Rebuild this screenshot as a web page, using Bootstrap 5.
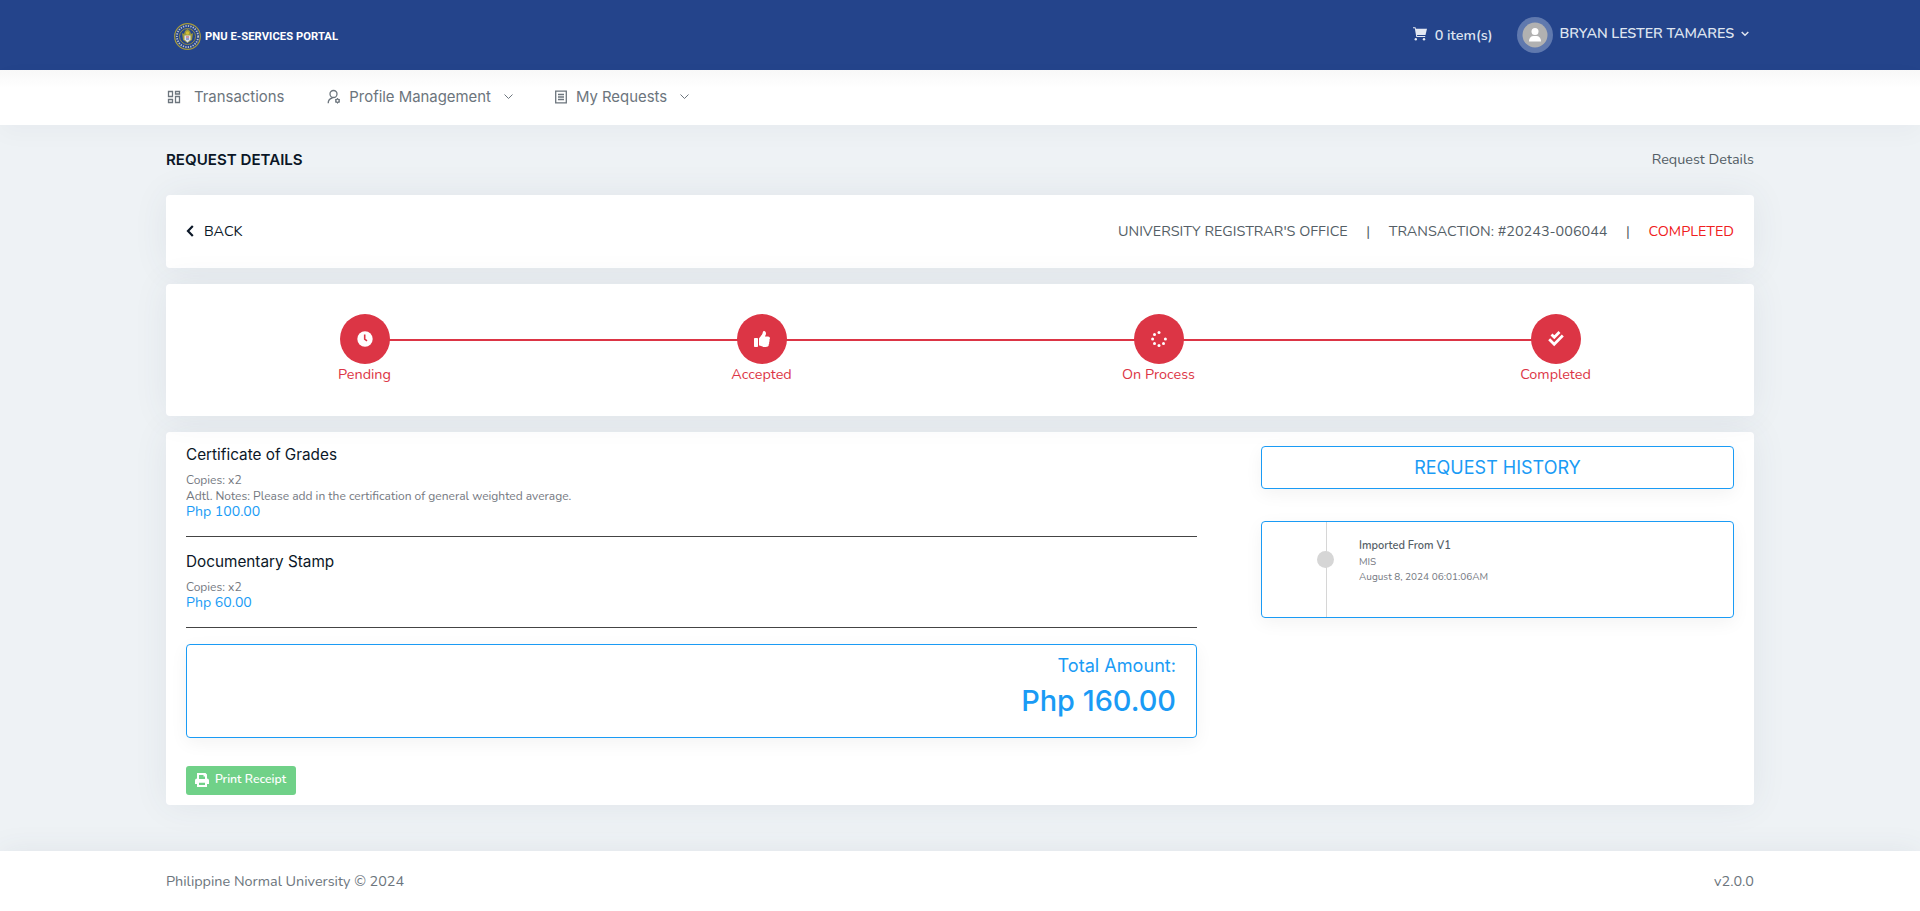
<!DOCTYPE html>
<html lang="en">
<head>
<meta charset="utf-8">
<meta name="viewport" content="width=device-width, initial-scale=1">
<title>Request Details</title>
<link href="https://cdn.jsdelivr.net/npm/bootstrap@5.3.0/dist/css/bootstrap.min.css" rel="stylesheet">
<style>
:root{--ink:#0b1727;--brand:#24448b;--azure:#1a9bf5;--soft:#74787f}
body{font-family:Nunito,Lato,sans-serif;font-size:14.4px;line-height:21px;color:#545e66;background:#eef2f5;min-height:911px}
.page{width:1588px;margin:0 auto}
.head-font{font-family:Inter,sans-serif}
.topbar{background:var(--brand);height:70px}
.brand-mark{padding:3px 0 0 8px;gap:4px}
.brand-text{font:700 11.2px Roboto,sans-serif;color:#fff;letter-spacing:.06px}
.userline{color:#dfe5f0;font-weight:600}
.cart{margin:-2px 8px 0 0}
.avatar{width:36px;height:36px;border-radius:50%;background:#6079ae;margin:0 7px 0 24px}
.user-name{margin-top:-3px;letter-spacing:-.1px}
.user-caret{margin:-3px 5px 0 7px}
.mainnav{height:55px;padding-bottom:2px;background:#fff linear-gradient(#f8f8f8,#fff 18px);box-shadow:0 8px 24px rgba(18,38,63,.03)}
.mainnav a{color:#6c757d;font:400 14.9px/20px Inter,sans-serif;text-decoration:none}
.mainnav .down{margin-left:13px}
.page-head{height:70px;padding-bottom:2px}
.page-head h1{font-size:15.1px;font-weight:600;line-height:21px;color:var(--ink)}
.panel{background:#fff;border-radius:4px;box-shadow:0 0 35px rgba(60,80,100,.08)}
.bar{height:73px;padding:0 20px}
.back{color:var(--ink)}
.back svg{margin:-3px 10px 0 0}
.sep{width:41px;text-align:center}
.done{color:#f02020}
.steps{height:132px}
.steps-line{height:2px;background:#dc3545;left:12.5%;right:12.5%;top:55px}
.step{color:#dc3545;padding-top:30px}
.step-dot{width:50px;height:50px;background:#dc3545}
.details{height:373px;padding:14px 20px 0}
.items{width:1011px}
.history{width:473px}
.outline{border:1px solid var(--azure);border-radius:4px;box-shadow:0 5px 18px rgba(0,0,0,.05);color:var(--azure)}
.item-title{font:400 15.3px/18px Inter,sans-serif;color:var(--ink);margin-bottom:8px}
.fine{font-size:12px;line-height:16px;color:var(--soft)}
.price{color:var(--azure);font-size:14.1px;line-height:15px}
.rule{height:1px;background:#444;margin:17px 0 16px}
.total{height:94px;padding:9px 20px}
.total-label{font-size:18.1px;line-height:23px}
.total-sum{font-size:28.9px;line-height:36px;margin-top:6px;font-weight:500}
.receipt,.receipt:hover{background:#70d188;color:#fff;width:110px;height:29px;border-radius:3px;font-size:12.2px;font-weight:600;margin-top:28px;padding:0 1px 2px 0;gap:6px;border:0}
.history-title{height:43px;font-size:18px;line-height:41px}
.timeline{height:97px;margin-top:32px}
.tl-line{width:1px;background:#d6d6d6;margin-left:64px}
.tl-dot{width:17px;height:17px;border-radius:50%;background:#d6d6d6;left:-9px;top:29px}
.tl-text{padding:16px 0 0 32px;font-size:10px;line-height:15.5px;color:var(--soft)}
.tl-name{font-size:11px;line-height:16.5px;font-weight:600;color:#545e66}
.foot{height:60px;background:#fff;box-shadow:0 0 30px rgba(60,80,100,.08);color:#6c757d}
</style>
</head>
<body class="d-flex flex-column">
<header class="topbar">
 <div class="page h-100 d-flex align-items-center justify-content-between">
  <div class="brand-mark d-flex align-items-center">
   <svg width="27" height="27" viewBox="0 0 27 27" fill="none"><circle cx="13.5" cy="13.5" r="12.8" stroke="#a79b3c" stroke-width="1.2"/><circle cx="13.5" cy="13.5" r="10.6" stroke="#b8bfd0" stroke-width="1.8" stroke-dasharray="1.3 1.2"/><circle cx="13.5" cy="13.5" r="8" stroke="#958e45"/><path d="M8 10l2 1 1-3 2.500-2 2.500 2 1 3 2-1-1 7-4.500 3-4.500-3z" fill="#9c983c"/><path d="M10.500 12.500h6v4l-3 3-3-3z" fill="#d9dff0"/><circle cx="13.500" cy="10" r="1.700" fill="#d2bd37"/><path d="M12 14h3" stroke="#c4404a"/><path d="M12 16h3" stroke="#4560a8"/></svg>
   <span class="brand-text">PNU E-SERVICES PORTAL</span>
  </div>
  <div class="d-flex align-items-center userline">
   <svg class="cart" width="14" height="14" viewBox="0 0 14 14" fill="#e3e8f2"><path d="M0 .3h2.500l.4 1.500H14L12.500 8H4l.2 1h8v1H3.300L1.800 1.300H0z"/><circle cx="2.800" cy="12.300" r="1.200"/><circle cx="11" cy="12.300" r="1.200"/></svg>
   <span>0 item(s)</span>
   <span class="avatar d-flex align-items-center justify-content-center"><svg width="26" height="26" viewBox="0 0 26 26"><circle cx="13" cy="13" r="12.500" fill="#b1b1b1"/><circle cx="13" cy="9.500" r="3.500" fill="#fff"/><path d="M7 19c0-3 2-5 4.500-5h3c2.500 0 4.500 2 4.500 5v.5H7z" fill="#fff"/></svg></span>
   <span class="user-name">BRYAN LESTER TAMARES</span>
   <svg class="user-caret" width="8" height="6" viewBox="0 0 8 6" fill="none" stroke="#dfe5f0" stroke-width="1.500"><path d="M.7 1L4 4.300 7.300 1"/></svg>
  </div>
 </div>
</header>
<nav class="mainnav">
 <div class="page h-100 d-flex align-items-center">
  <a href="#" class="d-flex align-items-center me-5"><svg class="me-2" width="16" height="16" viewBox="0 0 16 16" fill="none" stroke="#6c757d" stroke-width="1.300"><path d="M2.500 2.500h4v5h-4zM9.500 2.500h4v2.500h-4zM9.500 7.500h4v6h-4zM2.500 10.500h4v3h-4z"/></svg><span class="ms-1">Transactions</span></a>
  <a href="#" class="d-flex align-items-center me-5" style="margin-left:-5px"><svg width="14" height="16" viewBox="0 0 14 16" fill="none" stroke="#6c757d" stroke-width="1.300"><circle cx="6.500" cy="5" r="3.500"/><path d="M1.200 14.300c0-3 1.500-4.800 4.300-5.300"/><circle cx="10.500" cy="11.800" r="1.700" stroke-width="1.400"/><path d="M10.500 9v1M10.500 13.500v1M8 10.400l1 .6M12 12.600l1 .6M8 13.200l1-.6M12 11l1-.6" stroke-width="1"/></svg><span class="ms-2">Profile Management</span><svg class="down" width="9" height="6" viewBox="0 0 9 6" fill="none" stroke="#6c757d"><path d="M.5.5l4 4 4-4"/></svg></a>
  <a href="#" class="d-flex align-items-center" style="margin-left:-7px"><svg width="14" height="16" viewBox="0 0 14 16" fill="none" stroke="#6c757d" stroke-width="1.300"><path d="M1.700 2.200h10.600v11.600H1.700zM4 5.500h6M4 8h6M4 10.500h6"/></svg><span class="ms-2">My Requests</span><svg class="down" width="9" height="6" viewBox="0 0 9 6" fill="none" stroke="#6c757d"><path d="M.5.5l4 4 4-4"/></svg></a>
 </div>
</nav>
<main class="page flex-grow-1">
 <div class="page-head d-flex justify-content-between align-items-center"><h1 class="head-font m-0">REQUEST DETAILS</h1><span>Request Details</span></div>
 <section class="panel bar d-flex justify-content-between align-items-center mb-3">
  <span class="back"><svg width="8" height="12" viewBox="0 0 8 12" fill="none" stroke="#0b1727" stroke-width="2.200"><path d="M6.800 1L2 6l4.800 5"/></svg><span>BACK</span></span>
  <div class="d-flex"><span>UNIVERSITY REGISTRAR'S OFFICE</span><span class="sep">|</span><span>TRANSACTION: #20243-006044</span><span class="sep">|</span><span class="done">COMPLETED</span></div>
 </section>
 <section class="panel steps position-relative d-flex text-center mb-3">
  <div class="steps-line position-absolute"></div>
  <div class="step col-3"><div class="step-dot rounded-circle mx-auto position-relative d-flex align-items-center justify-content-center"><svg width="16" height="16" viewBox="0 0 16 16"><circle cx="8" cy="8" r="7.700" fill="#fff"/><path d="M7.700 3.500v4.700l2.300 1.700" fill="none" stroke="#dc3545" stroke-width="1.600"/></svg></div><span>Pending</span></div>
  <div class="step col-3"><div class="step-dot rounded-circle mx-auto position-relative d-flex align-items-center justify-content-center"><svg width="16" height="16" viewBox="0 0 512 512" fill="#fff"><path d="M104 224H24c-13 0-24 11-24 24v240c0 13 11 24 24 24h80c13 0 24-11 24-24V248c0-13-11-24-24-24zM384 81.500c0 42.400-26 66.200-33.300 94.500h101.700c33.400 0 59.400 27.700 59.600 58.100.1 18-7.600 37.300-19.500 49.300 9.800 23.300 8.200 56-9.300 79.500 8.700 25.900 0 57.700-16.400 74.800 4.300 17.600 2.300 32.600-6.100 44.600C440.200 511.600 389.600 512 346.800 512H344c-48.300 0-87.800-17.600-119.600-31.700-16-7.100-36.800-15.900-52.700-16.200-6.500-.1-11.800-5.500-11.800-12V238.300c0-3.200 1.300-6.300 3.600-8.500 39.600-39.100 56.600-80.600 89.100-113.100 14.800-14.800 20.200-37.200 25.400-58.900C282.500 39.300 291.800 0 312 0c24 0 72 8 72 81.500z"/></svg></div><span>Accepted</span></div>
  <div class="step col-3"><div class="step-dot rounded-circle mx-auto position-relative d-flex align-items-center justify-content-center"><svg width="16" height="16" viewBox="0 0 16 16" fill="#fff"><circle cx="8" cy="1.600" r="1.500"/><circle cx="3.500" cy="3.500" r="1.500"/><circle cx="1.600" cy="8" r="1.500"/><circle cx="3.500" cy="12.500" r="1.500"/><circle cx="8" cy="14.400" r="1.500"/><circle cx="12.500" cy="12.500" r="1.500"/><circle cx="14.400" cy="8" r="1.500"/></svg></div><span>On Process</span></div>
  <div class="step col-3"><div class="step-dot rounded-circle mx-auto position-relative d-flex align-items-center justify-content-center"><svg width="16" height="16" viewBox="0 0 16 16" fill="none" stroke="#fff" stroke-width="2.800"><path d="M3.500 3.500l2.800 2.800 5.200-5.200M1.200 8.200l5 5 8.600-8.600"/></svg></div><span>Completed</span></div>
 </section>
 <section class="panel details d-flex justify-content-between">
  <div class="items">
   <div class="item-title">Certificate of Grades</div>
   <div class="fine">Copies: x2</div>
   <div class="fine">Adtl. Notes: Please add in the certification of general weighted average.</div>
   <div class="price">Php 100.00</div>
   <div class="rule"></div>
   <div class="item-title">Documentary Stamp</div>
   <div class="fine">Copies: x2</div>
   <div class="price">Php 60.00</div>
   <div class="rule"></div>
   <div class="outline total head-font text-end"><div class="total-label">Total Amount:</div><div class="total-sum">Php 160.00</div></div>
   <button class="receipt btn d-flex align-items-center justify-content-center"><svg width="14" height="14" viewBox="0 0 14 14"><path fill="#fff" fill-rule="evenodd" d="M2 0h8.500L12 1.500V5.500a2 2 0 0 1 2 2V11h-2v3H2v-3H0V7.500a2 2 0 0 1 2-2zM4 2v4h6V3.500H8.500V2zM4 9.800V12h6V9.800z"/></svg><span>Print Receipt</span></button>
  </div>
  <div class="history">
   <div class="outline history-title head-font text-center">REQUEST HISTORY</div>
   <div class="outline timeline d-flex"><div class="tl-line position-relative"><div class="tl-dot position-absolute"></div></div>
    <div class="tl-text"><div class="tl-name">Imported From V1</div><div>MIS</div><div>August 8, 2024 06:01:06AM</div></div>
   </div>
  </div>
 </section>
</main>
<footer class="foot"><div class="page h-100 d-flex justify-content-between align-items-center"><span>Philippine Normal University © 2024</span><span>v2.0.0</span></div></footer>
</body>
</html>
